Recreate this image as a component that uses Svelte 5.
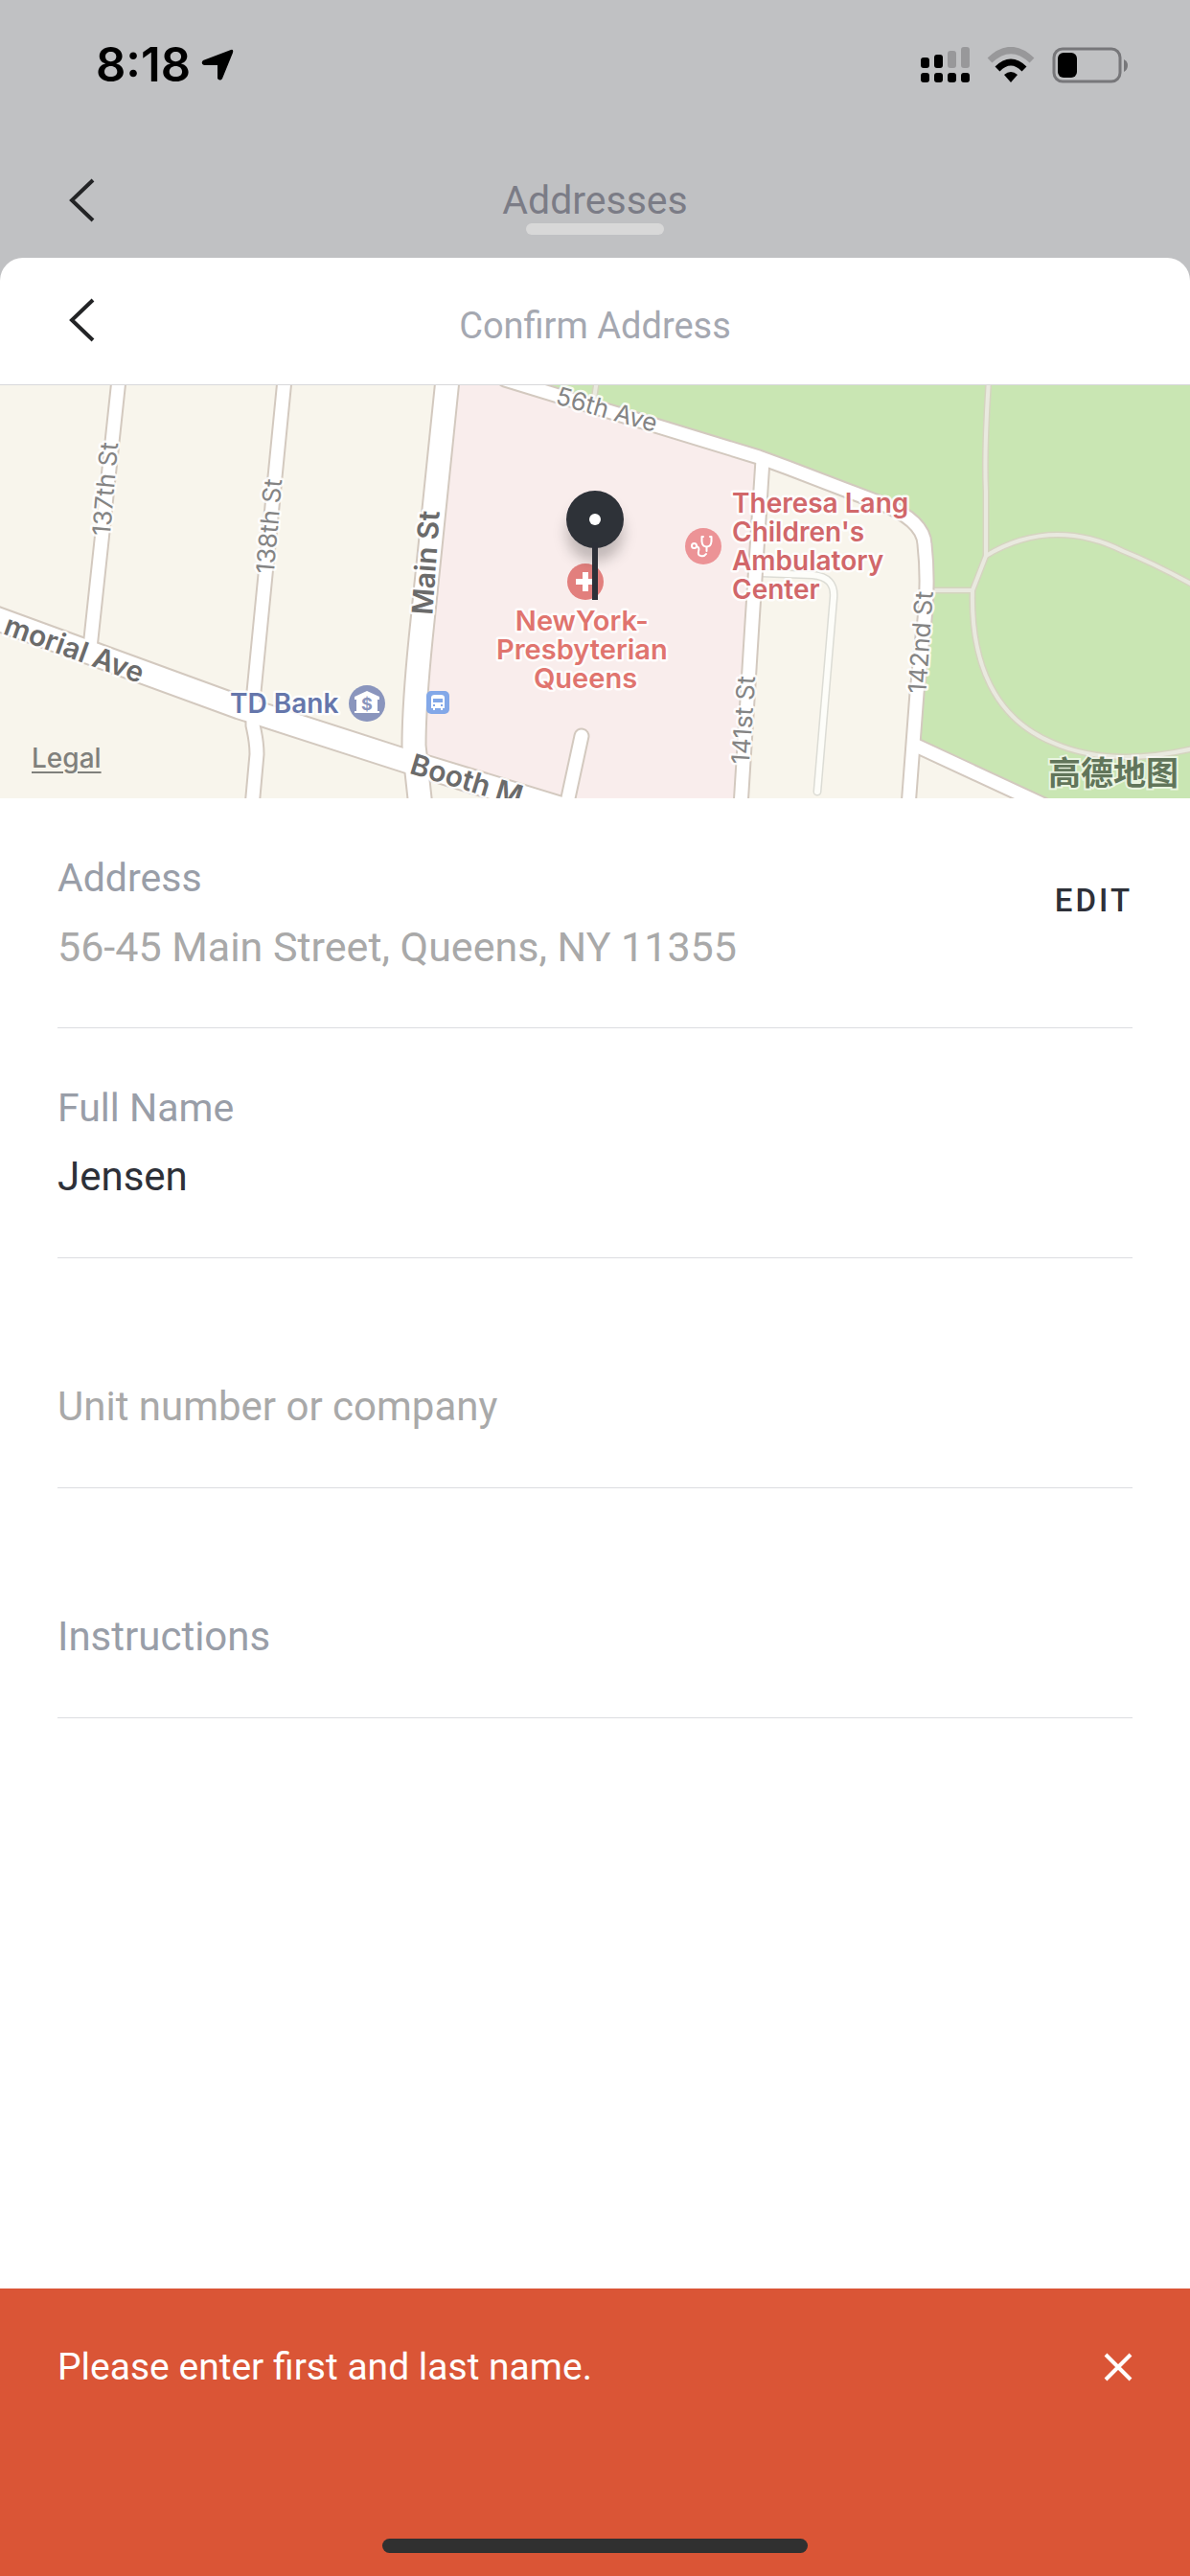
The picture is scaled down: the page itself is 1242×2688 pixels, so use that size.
<!--
  ConfirmAddress — bottom sheet shown over the address list. Map preview on
  top, the editable fields below it and an error bar pinned to the bottom.
-->
<script lang="ts">
  let fullName = $state('Jensen');
  let unit = $state('');
  let instructions = $state('');
  let showError = $state(true);

  const address = '56-45 Main Street, Queens, NY 11355';

  // road centre lines, drawn twice: casing first, then the white fill
  const streets = [
    'M124 -6 L94 274',
    'M297 -6 L264 330 V355 Q268 372 268 385 L263 440',
    'M527 -6 L792 75 L822 86 L882 109 L919 123 Q964 141 965 166 Q970 210 963 262 L957 321 L948 440',
    'M796 78 L785 248 L773 440',
    'M607 366 L591 440',
    'M956 376 L1096 441',
  ];
  const avenues = [
    'M-10 241 L250 336 L430 394 L600 446',
    'M467 -6 L441 246 Q432 330 432 376 L439 440',
  ];
  const paths = [
    'M1032 -6 Q1027 70 1029 110 L1029 178 L1015 214 H972',
    'M1029 178 C1080 147 1130 152 1172 173 Q1205 186 1250 211',
    'M1015 214 C1013 290 1038 348 1099 373 Q1160 400 1250 378',
    'M623 -6 L620 14',
  ];

  const streetLabels = [
    { text: '137th St', x: 119, y: 109, angle: -85 },
    { text: '138th St', x: 290, y: 148, angle: -85 },
    { text: '56th Ave', x: 631, y: 34, angle: 16 },
    { text: '141st St', x: 785, y: 350, angle: -86 },
    { text: '142nd St', x: 970, y: 269, angle: -86 },
  ];
  const avenueLabels = [
    { text: 'morial Ave', x: 74, y: 285, angle: 20 },
    { text: 'Main St', x: 455, y: 186, angle: -86 },
    { text: 'Booth M', x: 484, y: 422, angle: 17 },
  ];
</script>

{#snippet chevron()}
  <svg class="chevron" viewBox="0 0 27 46" aria-hidden="true">
    <path d="M25 2 L3 23 L25 44" fill="none" stroke="#232426" stroke-width="4" />
  </svg>
{/snippet}

<div class="screen">
  <div class="status">
    <div class="clock">
      <span>8:18</span>
      <svg width="34" height="34" viewBox="0 0 34 34" aria-hidden="true">
        <path d="M31 1 Q34 0 33 4 L22 31 Q20 34 17 31 V17 H3 Q-1 15 2 12 Z" />
      </svg>
    </div>
    <div class="indicators">
      <svg width="51" height="38" viewBox="0 0 51 38" aria-hidden="true">
        <g fill="#98989a">
          <rect x="28" y="4" width="9" height="18" rx="3" />
          <rect x="42" y="0" width="9" height="22" rx="3" />
        </g>
        <rect x="0" y="11" width="9" height="11" rx="3" />
        <rect x="14" y="8" width="9" height="14" rx="3" />
        <rect x="0" y="27" width="9" height="10" rx="3" />
        <rect x="14" y="27" width="9" height="10" rx="3" />
        <rect x="28" y="27" width="9" height="10" rx="3" />
        <rect x="42" y="27" width="9" height="10" rx="3" />
      </svg>
      <svg width="50" height="38" viewBox="0 0 50 38" aria-hidden="true">
        <path d="M3 14 Q25 -7 47 14" fill="none" stroke="#98989a" stroke-width="7" />
        <path d="M11 23 Q25 9 39 23" fill="none" stroke="#000" stroke-width="7" />
        <path d="M18 29 Q25 23 32 29 L25 37 Z" />
      </svg>
      <svg width="80" height="38" viewBox="0 0 80 38" aria-hidden="true">
        <rect x="2" y="2" width="69" height="34" rx="9" fill="none" stroke="#77777a" stroke-width="3" />
        <path d="M75 13 Q79 15 79 19 Q79 24 75 26 Z" fill="#77777a" />
        <rect x="6" y="6" width="20" height="26" rx="6" />
      </svg>
    </div>
  </div>

  <div class="behind">
    <button class="back" aria-label="Back to account">{@render chevron()}</button>
    <h2>Addresses</h2>
  </div>
  <div class="grabber"></div>

  <main class="sheet">
    <header>
      <button class="back" aria-label="Back">{@render chevron()}</button>
      <h1>Confirm Address</h1>
    </header>

    <div class="map">
      <svg viewBox="0 0 1242 431" preserveAspectRatio="xMidYMid slice" role="img" aria-label="Map of the address">
        <defs>
          <filter id="pin-shadow" x="-50%" y="-50%" width="200%" height="200%">
            <feDropShadow dx="0" dy="14" stdDeviation="7" flood-color="#000" flood-opacity="0.22" />
          </filter>
        </defs>

        <rect width="1242" height="431" fill="#f8f5ec" />
        <path d="M467 0 H547 L792 78 L773 431 H560 L432 390 Z" fill="#f9edec" />
        <path d="M547 0 H1242 V431 H1080 L956 376 L967 210 L960 155 L919 123 L792 75 Z" fill="#c9e6b3" />

        <path class="lane-edge" d="M795 196 L848 198 Q872 200 870 222 L853 424" />
        <path class="lane" d="M795 196 L848 198 Q872 200 870 222 L853 424" />
        {#each paths as d}<path class="path-edge" {d} />{/each}
        {#each paths as d}<path class="path" {d} />{/each}
        {#each streets as d}<path class="street-edge" {d} />{/each}
        {#each avenues as d}<path class="avenue-edge" {d} />{/each}
        {#each streets as d}<path class="street" {d} />{/each}
        {#each avenues as d}<path class="avenue" {d} />{/each}

        {#each streetLabels as l}
          <text class="street-name" transform="translate({l.x} {l.y}) rotate({l.angle})">{l.text}</text>
        {/each}
        {#each avenueLabels as l}
          <text class="avenue-name" transform="translate({l.x} {l.y}) rotate({l.angle})">{l.text}</text>
        {/each}

        <text class="poi bank" x="240" y="342">TD Bank</text>
        <circle cx="383" cy="332" r="19" fill="#8a95bd" />
        <path d="M383 319 L396 325 V328 H394 V340 H396 V342 H370 V340 H372 V328 H370 V325 Z" fill="#fff" />
        <text class="dollar" x="383" y="339">$</text>

        <rect x="445" y="319" width="24" height="24" rx="5" fill="#83a8e8" />
        <path d="M450 337 V326 Q450 323 454 323 H460 Q464 323 464 326 V337 H462 V339 H460 V337 H454 V339 H452 V337 Z" fill="#fff" />
        <path d="M452 327 H462 V331 H452 Z M452 333 H454 V335 H452 Z M460 333 H462 V335 H460 Z" fill="#83a8e8" />

        <circle cx="611" cy="205" r="19" fill="#e27f7d" />
        <path d="M611 195 V215 M601 205 H621" stroke="#fff" stroke-width="6" />
        <text class="poi hospital" y="256">
          <tspan x="611">NewYork-</tspan>
          <tspan x="611" dy="30">Presbyterian</tspan>
          <tspan x="611" dy="30">Queens</tspan>
        </text>

        <circle cx="734" cy="168" r="19" fill="#ec9396" />
        <g fill="none" stroke="#fff" stroke-width="2" stroke-linecap="round">
          <path d="M734 158 H732.5 V163 Q733 168.500 737.500 168.500 Q742 168.500 742.500 163 V158 H741" />
          <path d="M737.500 169 V173 M737 176 Q735 179 731.500 178 Q728 177 729 173.500 Q730.500 169 727 168" />
          <circle cx="724.500" cy="167.500" r="2.500" />
        </g>
        <text class="poi clinic" y="133">
          <tspan x="764">Theresa Lang</tspan>
          <tspan x="764" dy="30">Children's</tspan>
          <tspan x="764" dy="30">Ambulatory</tspan>
          <tspan x="764" dy="30">Center</tspan>
        </text>

        <circle cx="621" cy="140" r="30" fill="#2d3038" filter="url(#pin-shadow)" />
        <rect x="618" y="164" width="6" height="60" fill="#2d3038" />
        <circle cx="621" cy="140" r="6" fill="#fff" />
      </svg>
      <a class="legal" href="#legal">Legal</a>
      <span class="provider" lang="zh-CN">高德地图</span>
    </div>

    <form onsubmit={(e) => e.preventDefault()}>
      <div class="field">
        <div class="row">
          <div class="stack">
            <label for="address">Address</label>
            <input id="address" class="muted" value={address} readonly />
          </div>
          <button type="button" class="edit">EDIT</button>
        </div>
      </div>
      <div class="field">
        <div class="stack">
          <label for="name">Full Name</label>
          <input id="name" bind:value={fullName} />
        </div>
      </div>
      <div class="field">
        <input aria-label="Unit number or company" placeholder="Unit number or company" bind:value={unit} />
      </div>
      <div class="field">
        <input class="notes" aria-label="Instructions" placeholder="Instructions" bind:value={instructions} />
      </div>
    </form>
  </main>

  {#if showError}
    <div class="toast" role="alert">
      <div class="message">
        <p>Please enter first and last name.</p>
        <button aria-label="Dismiss" onclick={() => (showError = false)}>
          <svg width="30" height="30" viewBox="0 0 30 30" aria-hidden="true">
            <path d="M2 2 L28 28 M28 2 L2 28" stroke="#fff" stroke-width="4" />
          </svg>
        </button>
      </div>
      <div class="home"></div>
    </div>
  {/if}
</div>

<style>
  :global(body) {
    margin: 0;
    background: #c0c1c3;
  }
  .screen {
    display: flex;
    flex-direction: column;
    min-height: 100vh;
    background: #c0c1c3;
    font-family: Roboto, 'Liberation Sans', sans-serif;
    font-size: 42px;
    line-height: 48px;
  }
  button {
    padding: 0;
    border: 0;
    background: none;
    font: inherit;
    cursor: pointer;
  }
  svg {
    display: block;
  }
  h1,
  h2,
  p {
    margin: 0;
    font-weight: 400;
  }

  .status {
    display: flex;
    justify-content: space-between;
    align-items: center;
    height: 136px;
    padding: 0 64px 0 100px;
  }
  .clock,
  .indicators {
    display: flex;
    align-items: center;
  }
  .clock {
    gap: 11px;
    font-family: Inter, sans-serif;
    font-size: 49px;
    font-weight: 600;
  }
  .indicators {
    gap: 18px;
  }

  .behind {
    display: grid;
    grid-template-columns: 1fr auto 1fr;
    align-items: center;
    padding: 49px 72px 0;
  }
  .behind h2 {
    color: #7b7c86;
    font-size: 41px;
  }
  .back {
    justify-self: start;
  }
  .chevron {
    width: 27px;
    height: 46px;
  }
  .grabber {
    width: 144px;
    height: 12px;
    margin: 0 auto 24px;
    border-radius: 6px;
    background: #d8d8d8;
  }

  .sheet {
    flex: 1;
    border-radius: 24px 24px 0 0;
    background: #fff;
  }
  header {
    display: grid;
    grid-template-columns: 1fr auto 1fr;
    align-items: start;
    height: 90px;
    padding: 42px 72px 0;
    border-bottom: 1px solid #d8d8da;
  }
  h1 {
    color: #a5a8b1;
    font-size: 38px;
    line-height: 58px;
  }

  .map {
    position: relative;
    height: 431px;
    overflow: hidden;
  }
  .map svg {
    width: 100%;
    height: 100%;
  }
  .map path {
    stroke-linejoin: round;
  }
  .street-edge,
  .street,
  .avenue-edge,
  .avenue,
  .path-edge,
  .path,
  .lane-edge,
  .lane {
    fill: none;
    stroke-linecap: round;
  }
  .street-edge { stroke: #d3c9bf; stroke-width: 17; }
  .street { stroke: #fff; stroke-width: 13; }
  .avenue-edge { stroke: #d3c9bf; stroke-width: 27; }
  .avenue { stroke: #fff; stroke-width: 23; }
  .path-edge { stroke: #d5d4c0; stroke-width: 7; }
  .path { stroke: #e9e9df; stroke-width: 4; }
  .lane-edge { stroke: #dcdcd5; stroke-width: 9; }
  .lane { stroke: #fdfdf9; stroke-width: 6; }

  .map text {
    font-family: Inter, sans-serif;
    paint-order: stroke;
    stroke: rgba(255, 255, 255, 0.85);
    stroke-width: 5px;
    stroke-linejoin: round;
  }
  .map .street-name {
    fill: #848484;
    font-size: 26px;
    text-anchor: middle;
  }
  .map .avenue-name {
    fill: #6b6b6b;
    font-size: 30px;
    font-weight: 600;
    text-anchor: middle;
  }
  .map .poi {
    font-size: 28px;
    font-weight: 600;
  }
  .map .bank { fill: #6576ab; }
  .map .hospital { fill: #e0746e; font-size: 29px; text-anchor: middle; }
  .map .clinic { fill: #d1676a; }
  .map .dollar {
    fill: #8a95bd;
    stroke: none;
    font-size: 18px;
    font-weight: 700;
    text-anchor: middle;
  }
  .legal,
  .provider {
    position: absolute;
  }
  .legal {
    left: 33px;
    bottom: 18px;
    color: #80807c;
    font-family: Inter, sans-serif;
    font-size: 28px;
    font-weight: 500;
    text-decoration-thickness: 2px;
    text-underline-offset: 4px;
  }
  .provider {
    right: 12px;
    bottom: 4px;
    color: #61755a;
    font-family: 'Noto Sans CJK SC', sans-serif;
    font-size: 34px;
    font-weight: 700;
    paint-order: stroke;
    -webkit-text-stroke: 4px rgba(255, 255, 255, 0.6);
  }

  form {
    padding: 0 60px;
  }
  .field {
    display: flex;
    flex-direction: column;
    justify-content: flex-end;
    box-sizing: border-box;
    height: 240px;
    padding-bottom: 60px;
    border-bottom: 1px solid #dcdde0;
  }
  .row {
    display: flex;
    align-items: center;
    justify-content: space-between;
  }
  .row .stack {
    flex: 1;
  }
  .stack {
    display: flex;
    flex-direction: column;
    gap: 24px;
  }
  label {
    color: #999ea8;
    font-size: 41px;
  }
  input {
    width: 100%;
    height: 48px;
    padding: 0;
    border: 0;
    outline: 0;
    background: none;
    color: #2d3038;
    font: inherit;
  }
  .muted {
    color: #a9a9a9;
    font-size: 43px;
  }
  input::placeholder {
    color: #a9a9a9;
    opacity: 1;
  }
  .notes::placeholder {
    color: #999ea8;
  }
  .edit {
    margin-bottom: 24px;
    color: #2d3038;
    font-size: 33px;
    font-weight: 500;
    letter-spacing: 3px;
  }

  .toast {
    display: flex;
    flex-direction: column;
    justify-content: space-between;
    box-sizing: border-box;
    height: 300px;
    padding: 58px 60px 24px;
    background: #da5536;
    color: #fff;
  }
  .message {
    display: flex;
    align-items: center;
    justify-content: space-between;
    font-size: 39px;
  }
  .home {
    width: 444px;
    height: 15px;
    margin: 0 auto;
    border-radius: 8px;
    background: #303030;
  }
</style>
